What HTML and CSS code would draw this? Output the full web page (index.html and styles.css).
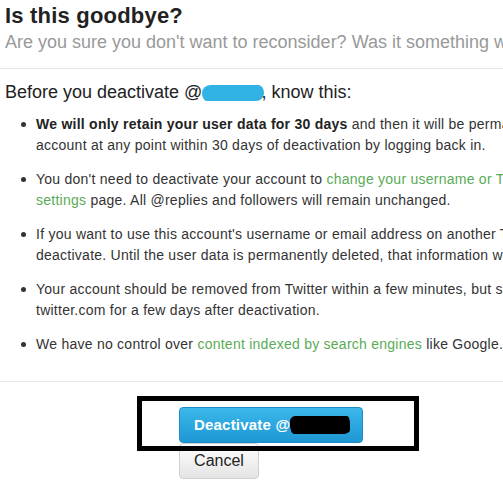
FILE: index.html
```html
<!DOCTYPE html>
<html lang="en">
<head>
<meta charset="utf-8">
<title>Is this goodbye?</title>
<link rel="stylesheet" href="styles.css">
</head>
<body>
<div class="page">
  <header class="header">
    <h1 class="title">Is this goodbye?</h1>
    <p class="subtitle">Are you sure you don't want to reconsider? Was it something we said? Tell us.</p>
  </header>
  <section class="content">
    <h2 class="lead">Before you deactivate @<span class="blob"></span>, know this:</h2>
    <ul class="points">
      <li><b>We will only retain your user data for 30 days</b> and then it will be permanently deleted. You can reactivate your<br>account at any point within 30 days of deactivation by logging back in.</li>
      <li>You don't need to deactivate your account to <a class="link" href="#">change your username or Twitter URL on your account</a><br><a class="link" href="#">settings</a> page. All @replies and followers will remain unchanged.</li>
      <li>If you want to use this account's username or email address on another Twitter account, change it before you<br>deactivate. Until the user data is permanently deleted, that information won't be available for use.</li>
      <li>Your account should be removed from Twitter within a few minutes, but some content may be viewable on<br>twitter.com for a few days after deactivation.</li>
      <li>We have no control over <a class="link" href="#">content indexed by search engines</a> like Google.</li>
    </ul>
  </section>
  <footer class="actions">
    <div class="buttons">
      <button class="btn btn-primary" type="button">Deactivate @<span class="scribble"></span></button>
      <button class="btn btn-cancel" type="button">Cancel</button>
    </div>
    <div class="highlight"></div>
  </footer>
</div>
</body>
</html>
```

FILE: styles.css
```css
html, body {
  margin: 0;
  padding: 0;
  overflow: hidden;
  background: #ffffff;
}

.page {
  font-family: "Liberation Sans", Arial, sans-serif;
  color: #333333;
  white-space: nowrap;
}

.header {
  padding: 3px 5px 15px;
  border-bottom: 1px solid #e6e6e6;
}

.title {
  margin: 0;
  font-size: 22px;
  line-height: 26px;
  font-weight: bold;
  letter-spacing: 0.2px;
  color: #222222;
}

.subtitle {
  margin: 2px 0 0;
  font-size: 18px;
  line-height: 22px;
  color: #999999;
}

.content {
  padding: 12px 5px 26px;
}

.lead {
  margin: 0;
  font-size: 18px;
  line-height: 22px;
  font-weight: normal;
  color: #222222;
}

.blob {
  display: inline-block;
  width: 62px;
  height: 16px;
  margin-right: -3px;
  vertical-align: -3px;
  background: #31b2e5;
  border-radius: 9px 6px 8px 5px / 8px 8px 8px 8px;
}

.points {
  margin: 11px 0 0;
  padding: 0 0 0 31px;
  list-style: none;
}

.points li {
  position: relative;
  font-size: 14px;
  line-height: 21px;
  letter-spacing: 0.25px;
  margin-bottom: 13px;
}

.points li:last-child {
  margin-bottom: 0;
}

.points li::before {
  content: "";
  position: absolute;
  left: -15px;
  top: 8px;
  width: 5px;
  height: 5px;
  border-radius: 50%;
  background: #333333;
}

.points b {
  color: #222222;
}

.link {
  color: #5aab57;
  text-decoration: none;
}

.actions {
  position: relative;
  border-top: 1px solid #e8e8e8;
  padding: 25px 0 0 179px;
}

.buttons {
  display: flex;
  flex-direction: column;
  align-items: flex-start;
}

.btn {
  font-family: "Liberation Sans", Arial, sans-serif;
  height: 36px;
  line-height: 34px;
  border-radius: 4px;
  margin: 0;
  cursor: pointer;
}

.btn-primary {
  width: 184px;
  padding: 0 0 0 14px;
  text-align: left;
  font-size: 15px;
  font-weight: bold;
  letter-spacing: 0.2px;
  color: #ffffff;
  background: linear-gradient(#3cb8ea, #1e97d4);
  border: 1px solid #1c8cc8;
  display: flex;
  align-items: center;
}

.scribble {
  display: inline-block;
  width: 60px;
  height: 18px;
  margin-left: 0;
  background: #000000;
  border-radius: 6px 3px 7px 4px / 5px 8px 4px 9px;
}

.btn-cancel {
  width: 80px;
  padding: 0;
  font-size: 16px;
  color: #222222;
  background: linear-gradient(#ffffff, #e4e4e4);
  border: 1px solid #d0d0d0;
}

.highlight {
  position: absolute;
  left: 137px;
  top: 14px;
  width: 272px;
  height: 45px;
  border: 5px solid #000000;
  pointer-events: none;
}
```
